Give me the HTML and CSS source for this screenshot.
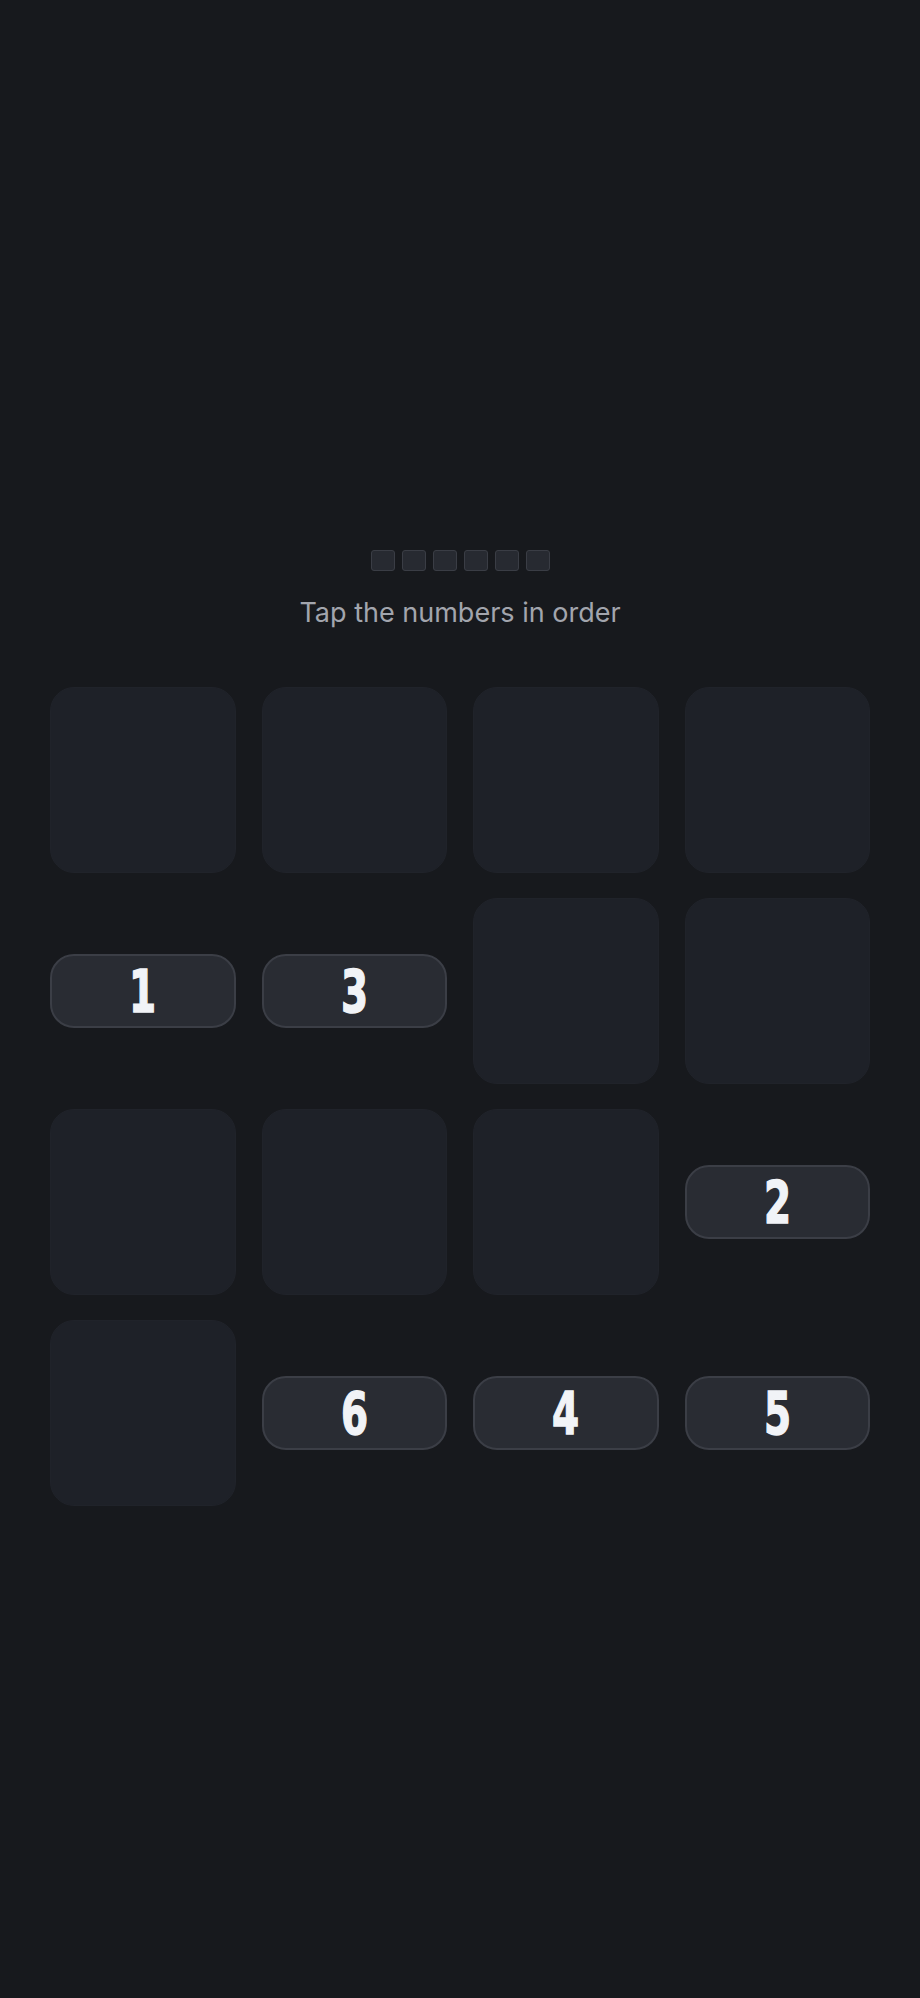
FILE: index.html
```html
<!DOCTYPE html>
<html lang="en">
<head>
    <meta charset="UTF-8">
    <title>Tap the numbers</title>
    <link rel="stylesheet" href="styles.css">
</head>
<body>
    <div class="game">
        <div class="progress">
            <span class="dot"></span><span class="dot"></span><span class="dot"></span>
            <span class="dot"></span><span class="dot"></span><span class="dot"></span>
        </div>
        <p class="hint">Tap the numbers in order</p>
        <div class="board">
            <div class="cell"><div class="tile"></div></div>
            <div class="cell"><div class="tile"></div></div>
            <div class="cell"><div class="tile"></div></div>
            <div class="cell"><div class="tile"></div></div>

            <div class="cell"><button class="num"><span>1</span></button></div>
            <div class="cell"><button class="num"><span>3</span></button></div>
            <div class="cell"><div class="tile"></div></div>
            <div class="cell"><div class="tile"></div></div>

            <div class="cell"><div class="tile"></div></div>
            <div class="cell"><div class="tile"></div></div>
            <div class="cell"><div class="tile"></div></div>
            <div class="cell"><button class="num"><span>2</span></button></div>

            <div class="cell"><div class="tile"></div></div>
            <div class="cell"><button class="num"><span>6</span></button></div>
            <div class="cell"><button class="num"><span>4</span></button></div>
            <div class="cell"><button class="num"><span>5</span></button></div>
        </div>
    </div>
</body>
</html>
```

FILE: styles.css
```css
body, html { margin: 0; padding: 0; background-color: #17191d; font-family: Inter, "Noto Sans", sans-serif; }
.game { padding: 550px 50px 0; }
.progress { display: flex; justify-content: center; gap: 7px; }
.dot { width: 22px; height: 19px; background-color: #272a31; border: 1px solid #3a3d45; border-radius: 3px; }
.hint { margin: 26px 0 0; text-align: center; color: #a2a5ad; font-size: 27px; line-height: 32px; }
.board { display: grid; grid-template-columns: repeat(4, 1fr); grid-auto-rows: 186px; gap: 25px 26px; margin-top: 58px; }
.cell { display: flex; align-items: center; }
.tile { width: 100%; height: 100%; box-sizing: border-box; background-color: #1e2128; border: 1px solid #20232a; border-radius: 24px; }
.num { width: 100%; height: 74px; background-color: #292c33; border: 2px solid #3b3e46; border-radius: 24px; color: #f1f3f7; font-family: "DejaVu Sans", sans-serif; font-weight: bold; font-size: 59px; line-height: 1; padding: 0; cursor: pointer; }
.num span { display: inline-block; transform: scaleX(0.66); -webkit-text-stroke: 1.5px #f1f3f7; }
```
